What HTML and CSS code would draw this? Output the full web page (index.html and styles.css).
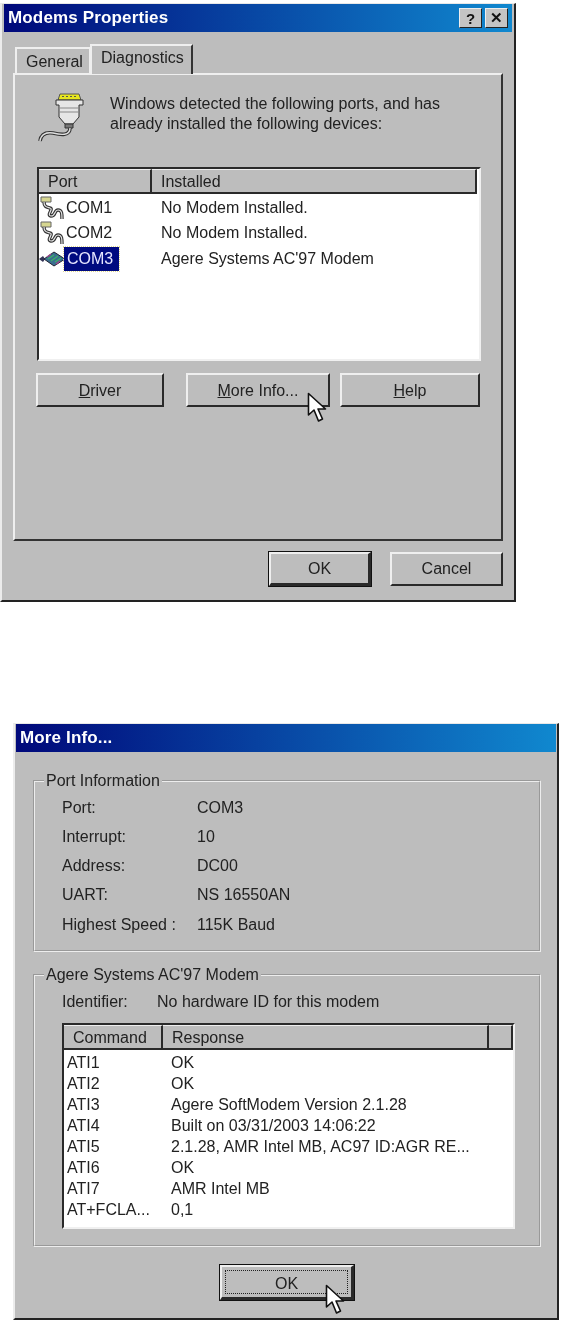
FILE: index.html
```html
<!DOCTYPE html>
<html lang="en">
<head>
    <meta charset="UTF-8">
    <title>Modems Properties</title>
    <link rel="stylesheet" href="styles.css">
</head>
<body>
    <svg class="defs" width="0" height="0">
        <symbol id="port" viewBox="0 0 27 24">
            <path d="M2 1 H12 V6 H2 Z" fill="#d6d690" stroke="#666" stroke-width="1"/>
            <path d="M5 6 C5 11 8 11 11 12 C15 13 7 19 12 20 C17 20 15 14 19 14 C23 14 23 18 23 23" fill="none" stroke="#333" stroke-width="3.4"/>
            <path d="M5 6 C5 11 8 11 11 12 C15 13 7 19 12 20 C17 20 15 14 19 14 C23 14 23 18 23 23" fill="none" stroke="#e4e4e4" stroke-width="1.2"/>
        </symbol>
        <symbol id="cursor" viewBox="0 0 21 31">
            <path d="M1.5 1.5 V23 L7 18 L11.5 29 L15.5 27 L11 17 H18.5 Z" fill="#fff" stroke="#111" stroke-width="1.6" stroke-linejoin="round"/>
        </symbol>
    </svg>

    <div class="window win-props">
        <div class="titlebar">
            <span class="title">Modems Properties</span>
            <div class="caption-btns">
                <span class="caption-btn">?</span>
                <span class="caption-btn">&#10005;</span>
            </div>
        </div>

        <div class="tabs">
            <span class="tab">General</span>
            <span class="tab active">Diagnostics</span>
        </div>

        <div class="pane">
            <div class="intro">
                <svg class="plug" width="48" height="52" viewBox="0 0 48 52">
                    <path d="M21 8 L23 2 H42 L44 8 Z" fill="#e6e61e" stroke="#555"/>
                    <path d="M25 4.500 H40" stroke="#555" stroke-dasharray="2 2"/>
                    <path d="M19 8 H46 V13 H42 V25 L36 32 H28 L22 25 V13 H19 Z" fill="#e6e6e6" stroke="#333"/>
                    <path d="M22 16 H42 M22 20 H42" stroke="#888"/>
                    <path d="M28 32 H36 V36 H28 Z" fill="#777" stroke="#333"/>
                    <path d="M33 36 C33 44 24 43 16 41 C9 40 4 42 3 49" fill="none" stroke="#333" stroke-width="3.6"/>
                    <path d="M33 36 C33 44 24 43 16 41 C9 40 4 42 3 49" fill="none" stroke="#e0e0e0" stroke-width="1.4"/>
                </svg>
                <p class="intro-text">Windows detected the following ports, and has<br>already installed the following devices:</p>
            </div>

            <div class="list list-ports">
                <div class="list-head">
                    <span class="head-cell col-port">Port</span>
                    <span class="head-cell col-fill">Installed</span>
                </div>
                <div class="port-rows">
                    <div class="port-row">
                        <svg class="port-icon" width="27" height="24"><use href="#port"/></svg>
                        <span class="port-name">COM1</span>
                        <span>No Modem Installed.</span>
                    </div>
                    <div class="port-row">
                        <svg class="port-icon" width="27" height="24"><use href="#port"/></svg>
                        <span class="port-name">COM2</span>
                        <span>No Modem Installed.</span>
                    </div>
                    <div class="port-row">
                        <svg class="port-icon" width="27" height="24" viewBox="0 0 27 24">
                            <path d="M0 12 L4 9 L6 12 L4 15 Z" fill="#335"/>
                            <path d="M5 12 L15 5 L26 12 L15 19 Z" fill="#3a6f8f" stroke="#223"/>
                            <path d="M9 12 L15 8 M12 14 L19 9 M16 15 L22 11" stroke="#3fae6a" stroke-width="1.4"/>
                            <path d="M8 10 L12 7 M17 17 L21 14" stroke="#a04a8a" stroke-width="1.4"/>
                        </svg>
                        <span class="port-name selected">COM3</span>
                        <span>Agere Systems AC'97 Modem</span>
                    </div>
                </div>
            </div>

            <div class="pane-btns">
                <button class="btn btn-driver"><u>D</u>river</button>
                <button class="btn btn-more"><u>M</u>ore Info...</button>
                <button class="btn btn-help"><u>H</u>elp</button>
            </div>
            <svg class="cursor cursor-more" width="21" height="31"><use href="#cursor"/></svg>
        </div>

        <div class="footer">
            <button class="btn btn-ok default">OK</button>
            <button class="btn btn-cancel">Cancel</button>
        </div>
    </div>

    <div class="window win-info">
        <div class="titlebar">
            <span class="title">More Info...</span>
        </div>

        <fieldset class="group group-port">
            <legend>Port Information</legend>
            <div class="info-grid">
                <span>Port:</span><span>COM3</span>
                <span>Interrupt:</span><span>10</span>
                <span>Address:</span><span>DC00</span>
                <span>UART:</span><span>NS 16550AN</span>
                <span>Highest Speed :</span><span>115K Baud</span>
            </div>
        </fieldset>

        <fieldset class="group group-modem">
            <legend>Agere Systems AC'97 Modem</legend>
            <div class="identifier">
                <span>Identifier:</span>
                <span>No hardware ID for this modem</span>
            </div>
            <div class="list list-cmds">
                <div class="list-head">
                    <span class="head-cell col-cmd">Command</span>
                    <span class="head-cell col-resp">Response</span>
                    <span class="head-cell col-fill"></span>
                </div>
                <div class="cmd-row"><span>ATI1</span><span>OK</span></div>
                <div class="cmd-row"><span>ATI2</span><span>OK</span></div>
                <div class="cmd-row"><span>ATI3</span><span>Agere SoftModem Version 2.1.28</span></div>
                <div class="cmd-row"><span>ATI4</span><span>Built on 03/31/2003 14:06:22</span></div>
                <div class="cmd-row"><span>ATI5</span><span>2.1.28, AMR Intel MB, AC97 ID:AGR RE...</span></div>
                <div class="cmd-row"><span>ATI6</span><span>OK</span></div>
                <div class="cmd-row"><span>ATI7</span><span>AMR Intel MB</span></div>
                <div class="cmd-row"><span>AT+FCLA...</span><span>0,1</span></div>
            </div>
        </fieldset>

        <div class="info-footer">
            <button class="btn btn-info-ok default"><span class="focus-ring">OK</span></button>
        </div>
        <svg class="cursor cursor-ok" width="21" height="31"><use href="#cursor"/></svg>
    </div>
</body>
</html>
```

FILE: styles.css
```css
body {
    margin: 0;
    background: #fff;
    font-family: "Liberation Sans", Arial, sans-serif;
    font-size: 16px;
    color: #222;
}
.defs {
    display: block;
    height: 0;
}
.window {
    position: relative;
    box-sizing: border-box;
    background: #bdbdbd;
    border-top: 1px solid #e8e8e8;
    border-left: 2px solid #ececec;
    border-right: 2px solid #222;
    border-bottom: 2px solid #222;
    filter: blur(0.5px);
}
.win-props {
    width: 516px;
    height: 599px;
    margin-top: 3px;
    padding: 0 2px;
}
.win-info {
    width: 546px;
    height: 597px;
    margin: 121px 0 0 13px;
    padding: 0 1px;
}
.titlebar {
    display: flex;
    align-items: center;
    justify-content: space-between;
    height: 28px;
    padding: 0 4px;
    background: linear-gradient(90deg, #00087a, #1088cf);
    color: #fff;
}
.title {
    font-size: 17px;
    font-weight: bold;
    letter-spacing: 0.15px;
}
.caption-btns {
    display: flex;
    gap: 3px;
}
.caption-btn {
    display: flex;
    align-items: center;
    justify-content: center;
    width: 23px;
    height: 20px;
    box-sizing: border-box;
    background: #c4c4c4;
    border: 1px solid;
    border-color: #eee #222 #222 #eee;
    color: #111;
    font-size: 15px;
    font-weight: bold;
}

/* tabs */
.tabs {
    display: flex;
    align-items: flex-end;
    height: 42px;
    padding-left: 11px;
    margin-bottom: -1px;
}
.tab {
    position: relative;
    box-sizing: border-box;
    height: 27px;
    width: 75px;
    padding: 4px 0 0 9px;
    background: #bdbdbd;
    border: 2px solid #efefef;
    border-right: 1px solid #efefef;
    border-bottom: 0;
}
.tab.active {
    height: 30px;
    width: 103px;
    padding: 3px 0 0 9px;
    border-right: 2px solid #333;
    z-index: 1;
}
.pane {
    position: relative;
    box-sizing: border-box;
    width: 490px;
    height: 468px;
    margin-left: 9px;
    padding: 17px 20px 0 22px;
    border: 2px solid #efefef;
    border-right: 2px solid #333;
    border-bottom: 2px solid #333;
}
.intro {
    display: flex;
    gap: 25px;
    height: 75px;
}
.plug {
    flex: none;
}
.intro-text {
    margin: 2px 0 0;
    line-height: 20px;
    white-space: nowrap;
}

/* lists */
.list {
    box-sizing: border-box;
    background: #fff;
    border: 2px solid #2a2a2a;
    border-right: 2px solid #f0f0f0;
    border-bottom: 2px solid #f0f0f0;
}
.list-ports {
    width: 444px;
    height: 194px;
}
.list-cmds {
    width: 453px;
    height: 206px;
}
.list-head {
    display: flex;
    height: 23px;
    background: #bdbdbd;
    border-bottom: 2px solid #2a2a2a;
}
.list-ports .list-head {
    margin-right: 2px;
}
.head-cell {
    box-sizing: border-box;
    padding: 3px 0 0 9px;
    border-top: 1px solid #eee;
    border-right: 2px solid #2a2a2a;
}
.col-port {
    width: 113px;
}
.col-fill {
    flex: 1;
}
.col-cmd {
    width: 99px;
}
.col-resp {
    width: 326px;
}
.port-rows {
    padding-top: 1px;
}
.port-row {
    display: flex;
    align-items: center;
    height: 25.5px;
}
.port-icon {
    flex: none;
    width: 27px;
}
.port-name {
    flex: none;
    width: 95px;
}
.selected {
    box-sizing: border-box;
    width: 55px;
    height: 24px;
    margin-right: 42px;
    padding: 3px 0 0 3px;
    margin-left: -2px;
    background: #000a80;
    color: #e6e6ff;
    outline: 1px dotted #e0d890;
}

/* buttons */
.btn {
    box-sizing: border-box;
    height: 34px;
    padding: 0;
    background: #bdbdbd;
    border: 2px solid;
    border-color: #efefef #2a2a2a #2a2a2a #efefef;
    color: #222;
    font-family: inherit;
    font-size: 16px;
}
.default {
    outline: 1px solid #111;
    border-right-width: 3px;
    border-bottom-width: 3px;
}
.pane-btns {
    display: flex;
    margin: 12px 0 0 -1px;
}
.pane-btns .btn {
    padding-top: 2px;
}
.btn-driver {
    width: 128px;
    margin-right: 22px;
}
.btn-more {
    width: 144px;
    margin-right: 10px;
}
.btn-help {
    width: 140px;
}
.cursor {
    position: absolute;
}
.cursor-more {
    left: 292px;
    top: 317px;
}
.footer {
    display: flex;
    gap: 19px;
    justify-content: flex-end;
    margin: 11px 9px 0 0;
}
.btn-ok {
    width: 102px;
}
.btn-cancel {
    width: 113px;
}

/* more info */
.group {
    box-sizing: border-box;
    width: 508px;
    margin: 0 0 0 17px;
    padding: 0;
    border: 2px groove #ededed;
}
.group legend {
    margin-left: 9px;
    padding: 0 2px;
    line-height: 18px;
}
.group-port {
    height: 180px;
    margin-top: 20px;
}
.group-modem {
    height: 281px;
    margin-top: 14px;
}
.info-grid {
    display: grid;
    grid-template-columns: 135px 1fr;
    grid-auto-rows: 29.25px;
    align-items: center;
    padding: 3px 0 0 27px;
}
.identifier {
    display: flex;
    gap: 29px;
    padding: 0 0 0 27px;
    line-height: 18px;
    margin-top: 9px;
}
.identifier span:first-child {
    width: 66px;
}
.list-cmds {
    margin: 12px 0 0 27px;
}
.list-cmds .list-head {
    margin-bottom: 2px;
}
.cmd-row {
    display: grid;
    grid-template-columns: 104px 1fr;
    align-items: center;
    height: 21px;
    padding-left: 3px;
    white-space: nowrap;
}
.info-footer {
    display: flex;
    margin: 18px 0 0 204px;
}
.btn-info-ok {
    width: 134px;
    height: 35px;
    padding: 3px;
}
.focus-ring {
    display: block;
    height: 100%;
    box-sizing: border-box;
    padding-top: 4px;
    border: 1px dotted #222;
}
.cursor-ok {
    left: 310px;
    top: 560px;
}
```
